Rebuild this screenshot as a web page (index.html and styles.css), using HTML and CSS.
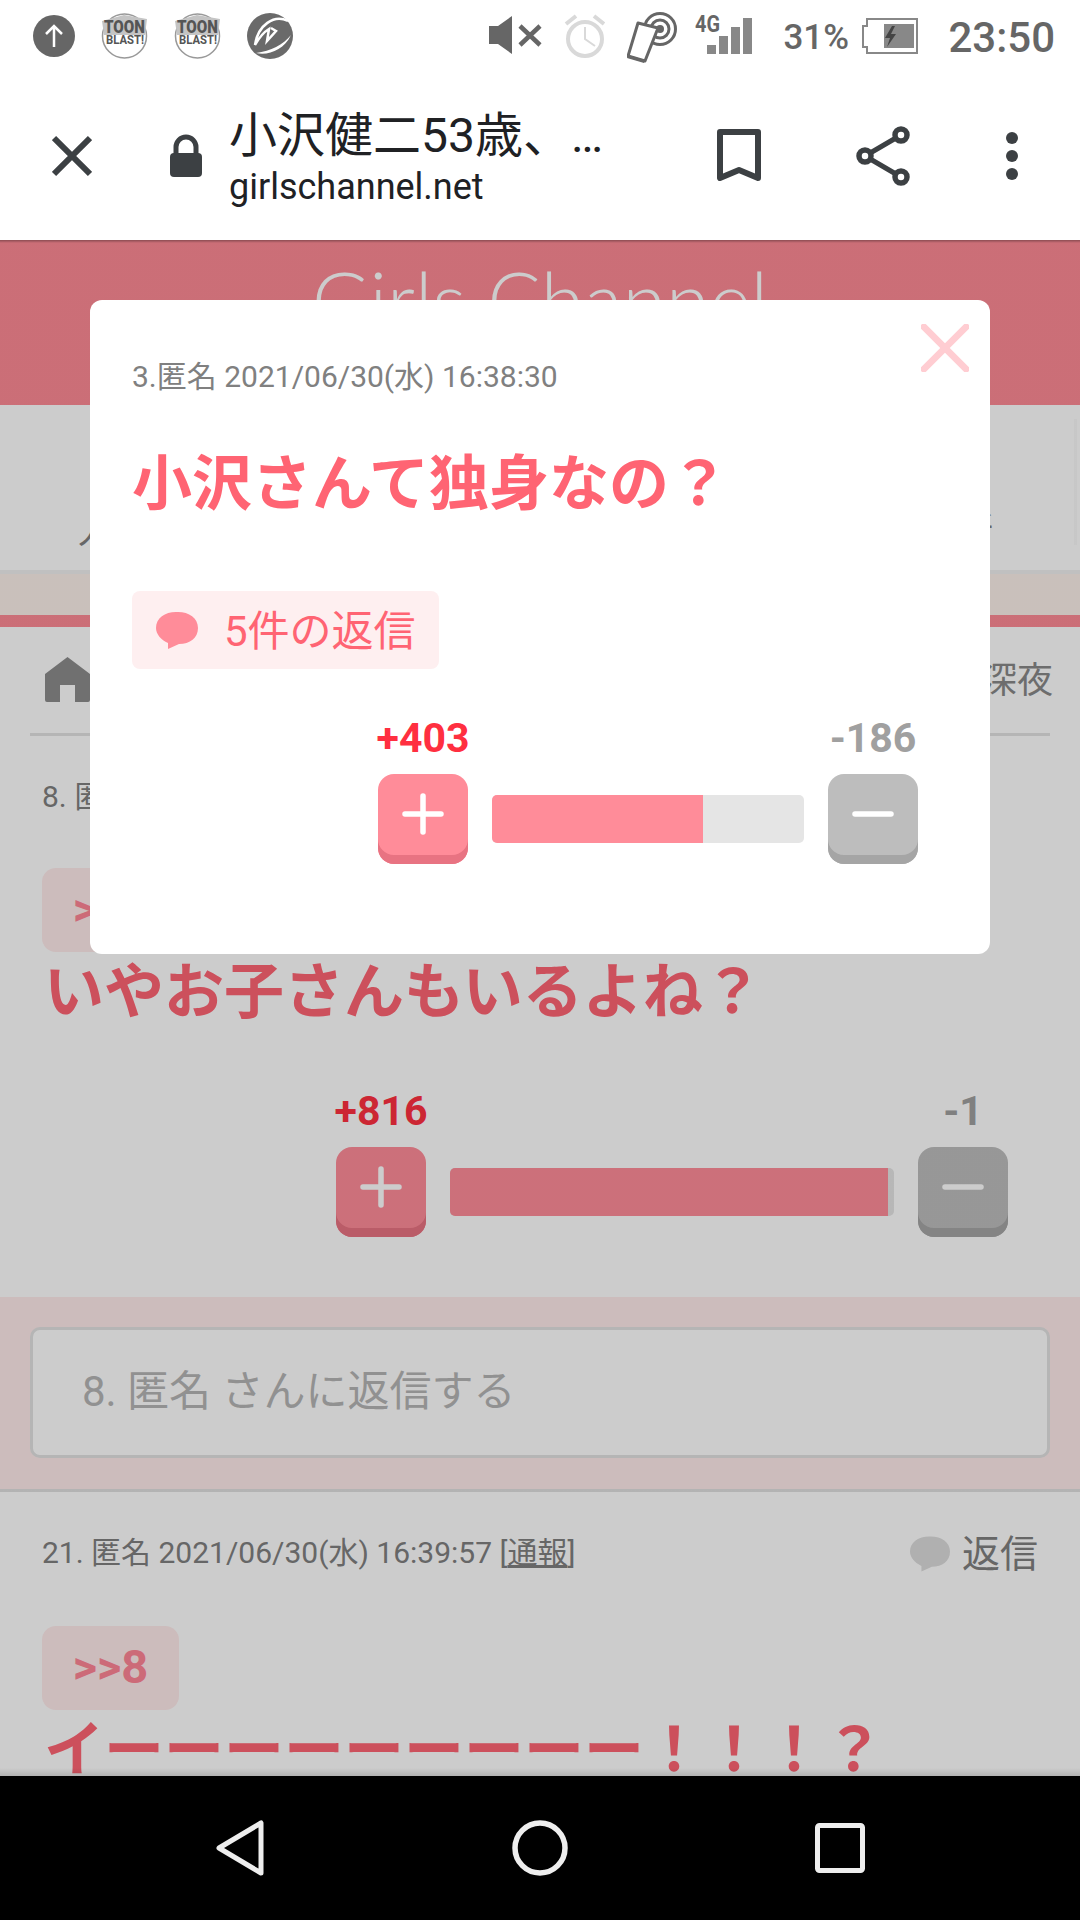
FILE: index.html
```html
<!DOCTYPE html>
<html lang="ja">
<head>
    <meta charset="UTF-8">
    <meta name="viewport" content="width=device-width, initial-scale=1.0">
    <title>小沢健二53歳、…</title>
    <link rel="stylesheet" href="styles.css">
</head>
<body>
    <div class="status-bar">
        <div class="status-left">
            <svg class="ic" width="42" height="75" viewBox="33 0 42 75"><circle cx="54" cy="36" r="21" fill="#666"/><path d="M54 47V26M46 34l8-8 8 8" fill="none" stroke="#fff" stroke-width="2.500"/></svg>
            <svg class="ic toon" width="47" height="75" viewBox="0 0 47 75"><circle cx="23.500" cy="36" r="22" fill="#fff" stroke="#999" stroke-width="1.500"/><path d="M1 21l22-6 23 4-2 16H3z" fill="#c4c4c4"/><text x="3" y="33" textLength="41" lengthAdjust="spacingAndGlyphs" class="toon-a">TOON</text><text x="5" y="44" textLength="38" lengthAdjust="spacingAndGlyphs" class="toon-b">BLAST!</text></svg>
            <svg class="ic toon" width="47" height="75" viewBox="0 0 47 75"><circle cx="23.500" cy="36" r="22" fill="#fff" stroke="#999" stroke-width="1.500"/><path d="M1 21l22-6 23 4-2 16H3z" fill="#c4c4c4"/><text x="3" y="33" textLength="41" lengthAdjust="spacingAndGlyphs" class="toon-a">TOON</text><text x="5" y="44" textLength="38" lengthAdjust="spacingAndGlyphs" class="toon-b">BLAST!</text></svg>
            <svg class="ic trend" width="46" height="75" viewBox="247 0 46 75"><circle cx="270" cy="36" r="23" fill="#6a6a6a"/><path d="M288 21c-14-7-30 4-33 24 5-9 9-13 14-16l-2 12 9-10-5-3" fill="none" stroke="#fff" stroke-width="2.500"/><path d="M256 53c12 3 28-3 35-18-8 10-20 16-35 18z" fill="#fff"/></svg>
        </div>
        <div class="status-right">
            <svg class="ic" width="53" height="75" viewBox="488 0 53 75"><path d="M488 26h9l14-10v38l-14-10h-9z" fill="#666"/><path d="M519 26l20 19M539 26l-20 19" stroke="#666" stroke-width="4.500"/></svg>
            <svg class="ic" width="41" height="75" viewBox="562 0 41 75"><circle cx="583" cy="39" r="17" fill="none" stroke="#d9d9d9" stroke-width="4"/><path d="M564 24l10-8M592 16l10 8" stroke="#d9d9d9" stroke-width="4"/><path d="M583 27v12l10 7" fill="none" stroke="#d9d9d9" stroke-width="2"/></svg>
            <svg class="ic" width="51" height="75" viewBox="627 0 51 75"><circle cx="660" cy="29" r="15.500" fill="none" stroke="#666" stroke-width="3"/><circle cx="660" cy="29" r="9" fill="none" stroke="#666" stroke-width="3"/><circle cx="660" cy="29" r="4" fill="#666"/><path d="M638 23l20 5-13 33-17-5z" fill="#fff" stroke="#666" stroke-width="3" stroke-linejoin="round"/><path d="M628 55l17 5-1 3-17-5z" fill="#666"/></svg>
            <svg class="ic signal" width="57" height="75" viewBox="695 0 57 75"><text x="695" y="32" textLength="25" lengthAdjust="spacingAndGlyphs" class="sig-text">4G</text><path d="M707 45h9v9h-9zM719 36h9v18h-9zM731 27h9v27h-9zM743 18h9v36h-9z" fill="#888"/></svg>
            <span class="pct">31%</span>
            <svg class="ic battery" width="56" height="75" viewBox="864 0 56 75"><path d="M869 19h50v34h-50v-6h-4v-21h4z" fill="#fff" stroke="#888" stroke-width="2"/><rect x="886" y="24" width="30" height="24" fill="#888"/><path d="M894 26l-7 12h5l-3 9 9-13h-5l4-8z" fill="#444"/></svg>
            <span class="clock">23:50</span>
        </div>
    </div>

    <div class="app-bar">
        <svg class="close-ic" width="40" height="165" viewBox="52 75 40 165"><path d="M54 138l36 36M90 138l-36 36" stroke="#3c4043" stroke-width="6"/></svg>
        <svg class="lock-ic" width="32" height="165" viewBox="170 75 32 165"><path d="M176 155v-8a10 10 0 0 1 20 0v8" fill="none" stroke="#3c4043" stroke-width="5"/><rect x="170" y="153" width="32" height="24" rx="4" fill="#3c4043"/></svg>
        <div class="page-title">
            <div class="title-main"><span>小沢健二53歳、</span><span class="dots">…</span></div>
            <div class="title-sub">girlschannel.net</div>
        </div>
        <svg class="mark-ic" width="44" height="165" viewBox="716 75 44 165"><path d="M719 132h38v46l-19-8-19 8z" fill="none" stroke="#3c4043" stroke-width="6" stroke-linejoin="round"/></svg>
        <svg class="share-ic" width="54" height="165" viewBox="855 75 54 165"><path d="M900 135l-36 21 36 21" fill="none" stroke="#3c4043" stroke-width="5"/><g fill="#fff" stroke="#3c4043" stroke-width="5.500"><circle cx="900" cy="135" r="6"/><circle cx="864" cy="156" r="6"/><circle cx="900" cy="177" r="6"/></g></svg>
        <svg class="more-ic" width="12" height="165" viewBox="1005 75 12 165"><circle cx="1011" cy="138" r="6" fill="#3c4043"/><circle cx="1011" cy="156" r="6" fill="#3c4043"/><circle cx="1011" cy="174" r="6" fill="#3c4043"/></svg>
    </div>

    <div class="page">
        <header class="site-head">Girls Channel</header>
        <nav class="tabs">
            <span>人気</span>
            <span>最新</span>
            <i class="tab-edge"></i>
        </nav>
        <div class="notice"></div>
        <div class="strip"></div>
        <div class="crumbs">
            <svg width="45" height="45" viewBox="0 0 45 45"><path d="M22.500 0L45 17v26a2 2 0 0 1-2 2H30V28H15v17H2a2 2 0 0 1-2-2V17z" fill="#8c8c8c"/></svg>
            <span class="crumb-text">深夜</span>
        </div>

        <section class="comment">
            <div class="meta"><span>8. 匿名 2021/06/30(水) 16:37:12</span></div>
            <div class="anchor">&gt;&gt;3</div>
            <p class="body-text">いやお子さんもいるよね？</p>
            <div class="votes votes-wide">
                <div class="vote-col">
                    <div class="count plus-count">+816</div>
                    <div class="vote-btn plus-btn"><svg width="42" height="42" viewBox="0 0 42 42"><path d="M21 3v36M3 21h36" stroke="#fff" stroke-width="5.500" stroke-linecap="round"/></svg></div>
                </div>
                <div class="track"><div class="fill" style="width: 98.6%"></div></div>
                <div class="vote-col">
                    <div class="count minus-count">-1</div>
                    <div class="vote-btn minus-btn"><svg width="42" height="42" viewBox="0 0 42 42"><path d="M3 21h36" stroke="#fff" stroke-width="5.500" stroke-linecap="round"/></svg></div>
                </div>
            </div>
        </section>

        <div class="reply-band">
            <div class="reply-input">8. 匿名 さんに返信する</div>
        </div>

        <section class="comment">
            <div class="meta">
                <span>21. 匿名 2021/06/30(水) 16:39:57 [<u>通報</u>]</span>
                <span class="reply-link">
                    <svg width="40" height="36" viewBox="0 0 42 37"><path d="M20 0h2c11 0 20 6 20 16s-8 16-19 16l-11 5v-6C5 28 0 22 0 16 0 6 9 0 20 0z" fill="#dcdcdc"/></svg>
                    返信
                </span>
            </div>
            <div class="anchor">&gt;&gt;8</div>
            <p class="body-text">イーーーーーーーーー！！！？</p>
        </section>

        <div class="dim"></div>

        <div class="modal">
            <svg class="modal-close" width="48" height="48" viewBox="0 0 50 50"><path d="M3 3l44 44M47 3L3 47" stroke="#ffcdd2" stroke-width="7" stroke-linecap="round"/></svg>
            <div class="modal-meta">3.匿名 2021/06/30(水) 16:38:30</div>
            <h2 class="modal-text">小沢さんて独身なの？</h2>
            <div class="reply-chip">
                <svg width="42" height="37" viewBox="0 0 42 37"><path d="M20 0h2c11 0 20 6 20 16s-8 16-19 16l-11 5v-6C5 28 0 22 0 16 0 6 9 0 20 0z" fill="#ff8c99"/></svg>
                <span class="chip-text">5件の返信</span>
            </div>
            <div class="votes votes-narrow">
                <div class="vote-col">
                    <div class="count plus-count">+403</div>
                    <div class="vote-btn plus-btn"><svg width="42" height="42" viewBox="0 0 42 42"><path d="M21 3v36M3 21h36" stroke="#fff" stroke-width="5.500" stroke-linecap="round"/></svg></div>
                </div>
                <div class="track"><div class="fill" style="width: 67.6%"></div></div>
                <div class="vote-col">
                    <div class="count minus-count">-186</div>
                    <div class="vote-btn minus-btn"><svg width="42" height="42" viewBox="0 0 42 42"><path d="M3 21h36" stroke="#fff" stroke-width="5.500" stroke-linecap="round"/></svg></div>
                </div>
            </div>
        </div>
    </div>

    <div class="nav-bar">
        <svg width="1080" height="144" viewBox="0 1776 1080 144">
            <path d="M261 1823v50l-42-25z" fill="none" stroke="#eee" stroke-width="5" stroke-linejoin="round"/>
            <circle cx="540" cy="1848" r="25" fill="none" stroke="#eee" stroke-width="5.500"/>
            <rect x="817.500" y="1825.500" width="45" height="45" rx="2" fill="none" stroke="#eee" stroke-width="5"/>
        </svg>
    </div>
</body>
</html>
```

FILE: styles.css
```css
body {
    margin: 0;
    width: 1080px;
    height: 1920px;
    overflow: hidden;
    display: flex;
    flex-direction: column;
    background-color: #fff;
    font-family: Roboto, "Noto Sans CJK JP", sans-serif;
}
svg {
    display: block;
    flex: none;
}

/* status bar */
.status-bar {
    height: 75px;
    flex: none;
    display: flex;
    justify-content: space-between;
    padding: 0 25px 0 33px;
    box-sizing: border-box;
}
.status-left, .status-right {
    display: flex;
    align-items: center;
}
.status-left { gap: 26px; }
.status-right { gap: 22px; }
.toon-a {
    font: 900 18px Roboto, sans-serif;
    fill: #555;
}
.toon-b {
    font: 700 12px Roboto, sans-serif;
    fill: #555;
}
.sig-text {
    font: 700 24px Roboto, sans-serif;
    fill: #666;
}
.signal { margin-left: -5px; }
.pct {
    font-size: 35px;
    font-weight: 500;
    color: #666;
    margin-left: 9px;
    width: 63px;
}
.battery { margin-left: -6px; }
.clock {
    font-size: 42px;
    font-weight: 500;
    color: #666;
    margin-left: 8px;
}

/* browser bar */
.app-bar {
    height: 165px;
    flex: none;
    display: flex;
    align-items: center;
    padding-left: 52px;
    box-sizing: border-box;
}
.lock-ic { margin-left: 78px; }
.page-title {
    width: 489px;
    margin-left: 27px;
    color: #202124;
}
.title-main {
    font-size: 48px;
    line-height: 58px;
    white-space: nowrap;
}
.title-sub {
    font-size: 36px;
    line-height: 44px;
}
.share-ic { margin-left: 95px; }
.more-ic { margin-left: 96px; }
.mark-ic { margin-left: -1px; }

/* page behind the dialog */
.page {
    flex: 1;
    position: relative;
    overflow: hidden;
    background-color: #fff;
}
.site-head {
    height: 165px;
    background-color: #fe8a95;
    color: #fff;
    font-family: Lato, sans-serif;
    font-weight: 300;
    font-size: 79px;
    line-height: 110px;
    text-align: center;
    padding-top: 4px;
    box-sizing: border-box;
}
.tabs {
    height: 169px;
    box-sizing: border-box;
    border-bottom: 4px solid #f0f0f0;
    display: flex;
    justify-content: space-between;
    align-items: flex-end;
    padding: 0 3px 18px 78px;
    font-size: 36px;
    line-height: 40px;
    color: #808080;
}
.tabs span:nth-child(2) { margin-left: auto; margin-right: 81px; }
.tab-edge {
    width: 3px;
    height: 126px;
    align-self: center;
    margin-top: 6px;
    background-color: #f9f9f9;
}
.notice {
    height: 41px;
    background-color: #fbf0ea;
}
.strip {
    height: 12px;
    background-color: #fe8a95;
}
.crumbs {
    height: 109px;
    margin: 0 30px;
    box-sizing: border-box;
    border-bottom: 3px solid #e2e2e2;
    display: flex;
    justify-content: space-between;
    align-items: flex-start;
    padding: 30px 0 0 15px;
    font-size: 36px;
    line-height: 44px;
    color: #888;
}
.crumb-text {
    margin: 2px -3px 0 0;
}
.comment {
    padding: 44px 72px 60px 42px;
}
.meta {
    display: flex;
    justify-content: space-between;
    font-size: 30px;
    line-height: 34px;
    color: #808080;
    margin-right: -30px;
    white-space: nowrap;
}
.reply-link {
    display: flex;
    align-items: center;
    gap: 12px;
    font-size: 38px;
}
.anchor {
    width: 137px;
    height: 84px;
    margin-top: 54px;
    background-color: #ffebeb;
    border-radius: 14px;
    color: #ff8596;
    font-size: 47px;
    font-weight: 700;
    line-height: 82px;
    text-align: center;
}
.body-text {
    margin: 6px 0 0 2px;
    font-size: 60px;
    font-weight: 700;
    line-height: 70px;
    color: #ff6473;
    white-space: nowrap;
}

/* votes */
.votes {
    display: flex;
    align-items: flex-end;
    gap: 24px;
    margin-left: auto;
}
.votes-wide {
    width: 672px;
    margin-top: 61px;
}
.votes-narrow {
    width: 540px;
    margin-top: 47px;
}
.vote-col {
    width: 90px;
    flex: none;
}
.count {
    display: flex;
    justify-content: center;
    font-size: 41px;
    font-weight: 700;
    line-height: 44px;
    margin-bottom: 14px;
    white-space: nowrap;
}
.plus-count { color: #ff2f40; }
.minus-count { color: #a0a0a0; }
.vote-btn {
    width: 90px;
    height: 90px;
    border-radius: 16px;
    display: flex;
    justify-content: center;
    padding-top: 19px;
    box-sizing: border-box;
}
.plus-btn {
    background-color: #ff8c99;
    box-shadow: inset 0 -9px 0 #e87382;
}
.minus-btn {
    background-color: #bdbdbd;
    box-shadow: inset 0 -9px 0 #a5a5a5;
}
.track {
    flex: 1;
    height: 48px;
    margin-bottom: 21px;
    background-color: #e5e5e5;
    border-radius: 5px;
    overflow: hidden;
}
.fill {
    height: 100%;
    background-color: #ff8c99;
}

/* reply box */
.reply-band {
    background-color: #ffebeb;
    border-bottom: 3px solid #e0e0e0;
    padding: 30px 30px 31px;
}
.reply-input {
    height: 131px;
    box-sizing: border-box;
    border: 3px solid #e2e2e2;
    border-radius: 10px;
    background-color: #fff;
    padding-left: 49px;
    font-size: 42px;
    line-height: 123px;
    color: #b5b5b5;
}

/* dimmer and dialog */
.dim {
    position: absolute;
    inset: 0;
    background: linear-gradient(rgba(0, 0, 0, .45), rgba(0, 0, 0, .2) 3px, rgba(0, 0, 0, .2) calc(100% - 8px), rgba(0, 0, 0, .3));
}
.modal {
    position: absolute;
    left: 90px;
    top: 60px;
    width: 900px;
    height: 654px;
    box-sizing: border-box;
    padding: 60px 72px 0 42px;
    background-color: #fff;
    border-radius: 12px;
}
.modal-close {
    position: absolute;
    right: 21px;
    top: 24px;
}
.modal-meta {
    font-size: 30px;
    line-height: 34px;
    color: #808080;
}
.modal-text {
    margin: 56px 0 0;
    font-size: 60px;
    font-weight: 700;
    line-height: 70px;
    color: #ff6473;
}
.reply-chip {
    width: 307px;
    height: 78px;
    margin-top: 71px;
    box-sizing: border-box;
    padding-left: 24px;
    display: flex;
    align-items: center;
    gap: 26px;
    background-color: #feeff0;
    border-radius: 8px;
    font-size: 42px;
    color: #ff6473;
}
.chip-text {
    margin-bottom: 5px;
}
.nav-bar {
    height: 144px;
    flex: none;
    background-color: #000;
}
```
